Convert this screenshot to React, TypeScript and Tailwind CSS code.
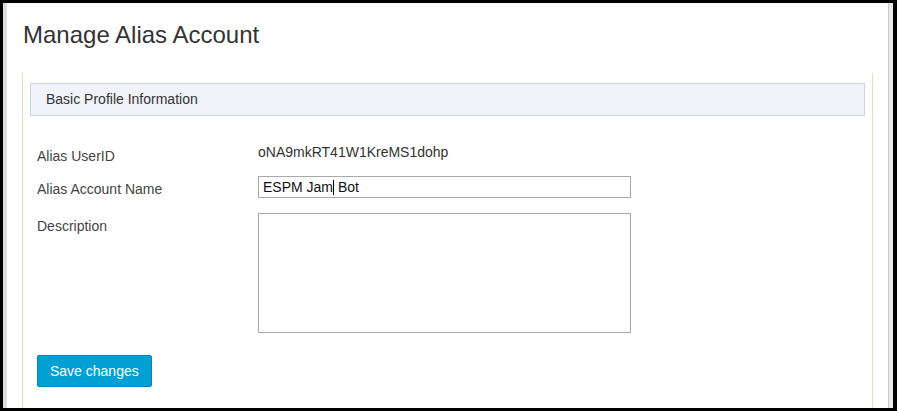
import React from "react";

const font = { fontFamily: '"Liberation Sans", Arial, sans-serif' };

function Row({ label, children, labelClass = "" }: { label: string; children: React.ReactNode; labelClass?: string }) {
  return (
    <div className="flex items-start">
      <div className={"w-[221px] shrink-0 text-[14px] leading-[20px] text-[#444] " + labelClass}>{label}</div>
      {children}
    </div>
  );
}

export default function App() {
  return (
    <div
      className="w-[897px] h-[411px] bg-black pt-[3px] pl-[3px] pr-[4px] pb-[3px] overflow-hidden"
      style={font}
    >
      <div className="flex h-full">
        {/* left window edge */}
        <div className="w-[4px] bg-[#dcdcdc]" />

        <div className="flex-1 bg-white flex flex-col px-[15px]">
          <h1 className="text-[24px] leading-[28px] text-[#333] pl-[1px] pt-[18px] pb-[24px]">
            Manage Alias Account
          </h1>

          {/* panel */}
          <div className="flex-1 border-x border-[#e2dfcb] pt-[10px] px-[7px]">
            <div className="h-[33px] border border-[#c9d4e1] bg-[#f0f4f9] flex items-center pl-[15px] text-[14px] text-[#333]">
              Basic Profile Information
            </div>

            <div className="pl-[7px] pt-[26px] flex flex-col">
              <Row label="Alias UserID" labelClass="pt-[4px]">
                <div className="text-[14px] leading-[20px] text-[#333]">oNA9mkRT41W1KreMS1dohp</div>
              </Row>

              <div className="mt-[10px]">
                <Row label="Alias Account Name" labelClass="pt-[3px]">
                  <div className="w-[373px] h-[22px] border border-[#a9a9a9] flex items-center pl-[4px] text-[14px] text-[#111]">
                    <span>ESPM Jam</span>
                    <span className="inline-block w-[1px] h-[15px] bg-black" />
                    <span className="whitespace-pre"> Bot</span>
                  </div>
                </Row>
              </div>

              <div className="mt-[14px]">
                <Row label="Description" labelClass="pt-[3px]">
                  <div className="w-[373px] h-[120px] border border-[#a9a9a9]" />
                </Row>
              </div>

              <div className="mt-[22px]">
                <button className="h-[32px] px-[12px] rounded-[2px] bg-[#00a0d5] border border-[#0088bb] text-white text-[14px] leading-none">
                  Save changes
                </button>
              </div>
            </div>
          </div>
        </div>

        {/* right scrollbar edge */}
        <div className="w-[1px] bg-[#c8c8c8]" />
        <div className="w-[4px] bg-[#ebebeb]" />
      </div>
    </div>
  );
}
